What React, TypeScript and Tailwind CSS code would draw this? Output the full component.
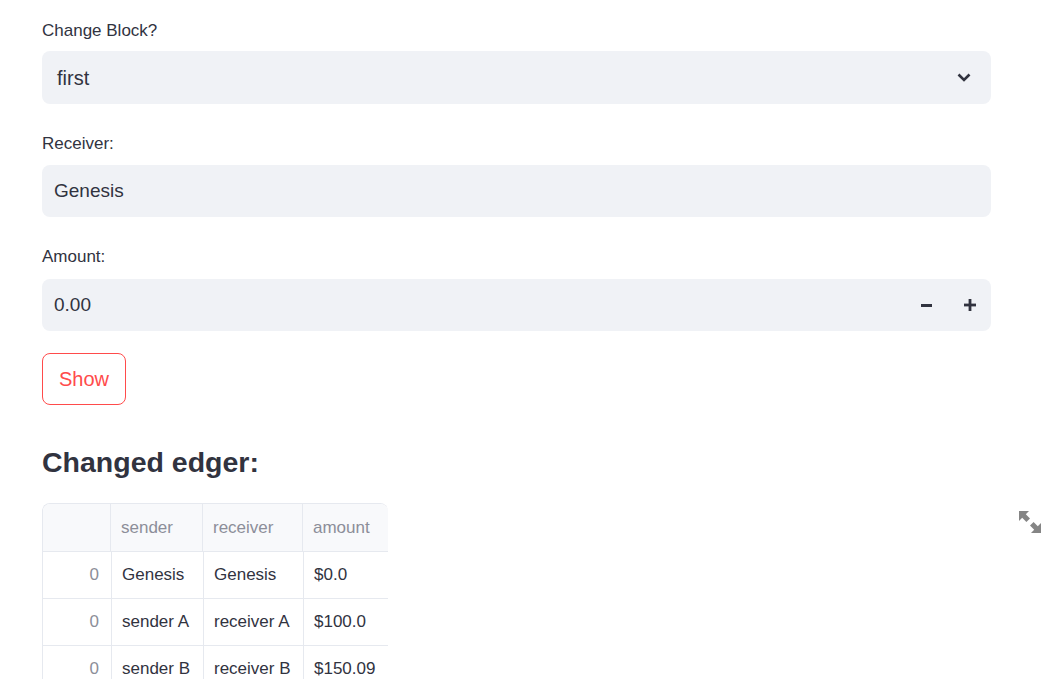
import React from 'react';

const rows = [
  { idx: 0, sender: 'Genesis', receiver: 'Genesis', amount: '$0.0' },
  { idx: 0, sender: 'sender A', receiver: 'receiver A', amount: '$100.0' },
  { idx: 0, sender: 'sender B', receiver: 'receiver B', amount: '$150.09' },
];

function Label({ children, mb }: { children: React.ReactNode; mb: string }) {
  return <div className={`h-[24px] leading-[24px] text-[17px] text-[#31333f] ${mb}`}>{children}</div>;
}

export default function App() {
  return (
    <div className="relative w-[1048px] h-[679px] overflow-hidden bg-white font-['Liberation_Sans',Arial,sans-serif] text-[#31333f]">
      <div className="w-[949px] ml-[42px] pt-[19px]">
        {/* Select */}
        <Label mb="mb-[8px]">Change Block?</Label>
        <div className="h-[53px] rounded-lg bg-[#f0f2f6] flex items-center justify-between pl-[15px] pr-[20px]">
          <span className="text-[20px]">first</span>
          <svg width="14" height="9" viewBox="0 0 14 9" fill="none">
            <path d="M1.5 1.5 L7 7 L12.5 1.5" stroke="#31333f" strokeWidth="2.6" />
          </svg>
        </div>

        {/* Text input */}
        <div className="mt-[28px]">
          <Label mb="mb-[9px]">Receiver:</Label>
          <div className="h-[52px] rounded-lg bg-[#f0f2f6] flex items-center pl-[12px]">
            <span className="text-[19px]">Genesis</span>
          </div>
        </div>

        {/* Number input */}
        <div className="mt-[28px]">
          <Label mb="mb-[10px]">Amount:</Label>
          <div className="h-[52px] rounded-lg bg-[#f0f2f6] flex items-center">
            <span className="flex-1 pl-[12px] text-[19px]">0.00</span>
            <div className="w-[43px] h-full flex items-center justify-center">
              <div className="w-[11px] h-[3px] bg-[#31333f]" />
            </div>
            <div className="w-[43px] h-full flex items-center justify-center">
              <svg width="12" height="12" viewBox="0 0 12 12">
                <rect x="0" y="4.6" width="12" height="2.8" fill="#31333f" />
                <rect x="4.6" y="0" width="2.8" height="12" fill="#31333f" />
              </svg>
            </div>
          </div>
        </div>

        {/* Button */}
        <button className="mt-[22px] h-[52px] px-[16px] rounded-lg border border-[#ff4b4b] text-[#ff4b4b] text-[20px] bg-white">
          Show
        </button>

        <h2 className="mt-[37px] h-[40px] leading-[40px] text-[28.5px] font-bold text-[#31333f]">Changed edger:</h2>

        {/* Data grid */}
        <div className="mt-[21px] w-[346px] overflow-hidden rounded-t-lg border-t border-l border-[#e6e9ef]">
          <div className="flex h-[48px] bg-[#f8f9fb] border-b border-[#e6e9ef] text-[17px] text-[#8c8e99]">
            <div className="w-[69px] border-r border-[#e6e9ef]" />
            <div className="w-[92px] shrink-0 border-r border-[#e6e9ef] flex items-center pl-[10px]">sender</div>
            <div className="w-[100px] shrink-0 border-r border-[#e6e9ef] flex items-center pl-[10px]">receiver</div>
            <div className="w-[85px] shrink-0 flex items-center pl-[10px]">amount</div>
          </div>
          {rows.map((r, i) => (
            <div key={i} className="flex h-[47px] border-b border-[#e6e9ef] text-[17px]">
              <div className="w-[69px] shrink-0 border-r border-[#e6e9ef] flex items-center justify-end pr-[12px] text-[#8c8e99]">
                {r.idx}
              </div>
              <div className="w-[92px] shrink-0 border-r border-[#e6e9ef] flex items-center pl-[10px] whitespace-nowrap">{r.sender}</div>
              <div className="w-[100px] shrink-0 border-r border-[#e6e9ef] flex items-center pl-[10px] whitespace-nowrap">{r.receiver}</div>
              <div className="w-[85px] shrink-0 flex items-center pl-[10px] whitespace-nowrap">{r.amount}</div>
            </div>
          ))}
        </div>
      </div>

      {/* Fullscreen icon */}
      <svg className="absolute left-[1019px] top-[511px]" width="22" height="22" viewBox="0 0 22 22" fill="#858585">
        <path d="M0 0 L10 0 L6.8 3.2 L11 7.4 L7.4 11 L3.2 6.8 L0 10 Z" />
        <path d="M22 22 L12 22 L15.2 18.8 L11 14.6 L14.6 11 L18.8 15.2 L22 12 Z" />
      </svg>
    </div>
  );
}
